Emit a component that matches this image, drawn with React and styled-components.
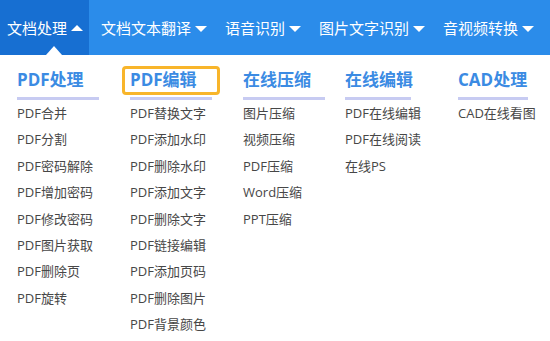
import React from "react";
import styled, { createGlobalStyle } from "styled-components";

const Global = createGlobalStyle`
  html, body { margin: 0; padding: 0; background: #fff; }
  body { font-family: "Open Sans", "Noto Sans CJK SC", sans-serif; }
`;

const Page = styled.div`
  width: 550px;
  height: 341px;
  overflow: hidden;
  background: #fff;
`;

const NavBar = styled.nav`
  height: 55px;
  background: #2b8cea;
  display: flex;
  align-items: stretch;
  gap: 5px;
`;

const Tab = styled.div`
  position: relative;
  display: flex;
  align-items: center;
  gap: 4px;
  padding: 0 6px 0 7px;
  background: ${(p) => (p.$active ? "#176fd2" : "transparent")};
  color: #fff;
  font-family: "Noto Sans CJK SC", sans-serif;
  font-size: 15px;
  white-space: nowrap;
`;

const Caret = styled.span`
  width: 0;
  height: 0;
  border-left: 6px solid transparent;
  border-right: 6px solid transparent;
  ${(p) =>
    p.$up
      ? "border-bottom: 6px solid #fff; margin-top: 1px;"
      : "border-top: 6px solid #fff; margin-top: 2px;"}
`;

const Pointer = styled.span`
  position: absolute;
  left: 46px;
  bottom: 0;
  width: 0;
  height: 0;
  border-left: 8px solid transparent;
  border-right: 8px solid transparent;
  border-bottom: 9px solid #fff;
`;

const Panel = styled.div`
  display: flex;
  padding: 10px 0 0 17px;
`;

const Column = styled.div`
  width: ${(p) => (p.$w ? `${p.$w}px` : "auto")};
  flex: none;
  display: flex;
  flex-direction: column;
  align-items: flex-start;
`;

const Heading = styled.div`
  position: relative;
  width: ${(p) => p.$w}px;
  line-height: 30px;
  padding-bottom: 2px;
  border-bottom: 3px solid #c7cbf2;
  font-size: 17px;
  font-weight: 700;
  color: #3b8be3;
  white-space: nowrap;
`;

const Highlight = styled.span`
  position: absolute;
  left: -8px;
  top: 1px;
  width: 98px;
  height: 29px;
  box-sizing: border-box;
  border: 3px solid #f8b52a;
  border-radius: 4px;
`;

const List = styled.ul`
  list-style: none;
  margin: 0;
  padding: 0;
`;

const Item = styled.li`
  font-size: 13px;
  line-height: 26.4px;
  color: #474747;
  white-space: nowrap;
`;

const tabs = [
  { label: "文档处理", active: true },
  { label: "文档文本翻译" },
  { label: "语音识别" },
  { label: "图片文字识别" },
  { label: "音视频转换" },
];

const columns = [
  {
    title: "PDF处理",
    w: 113,
    lw: 82,
    items: ["PDF合并", "PDF分割", "PDF密码解除", "PDF增加密码", "PDF修改密码", "PDF图片获取", "PDF删除页", "PDF旋转"],
  },
  {
    title: "PDF编辑",
    w: 113,
    lw: 82,
    highlight: true,
    items: ["PDF替换文字", "PDF添加水印", "PDF删除水印", "PDF添加文字", "PDF删除文字", "PDF链接编辑", "PDF添加页码", "PDF删除图片", "PDF背景颜色"],
  },
  {
    title: "在线压缩",
    w: 102,
    lw: 82,
    items: ["图片压缩", "视频压缩", "PDF压缩", "Word压缩", "PPT压缩"],
  },
  {
    title: "在线编辑",
    w: 113,
    lw: 66,
    items: ["PDF在线编辑", "PDF在线阅读", "在线PS"],
  },
  {
    title: "CAD处理",
    lw: 70,
    items: ["CAD在线看图"],
  },
];

export default function App() {
  return (
    <Page>
      <Global />
      <NavBar>
        {tabs.map((t) => (
          <Tab key={t.label} $active={t.active}>
            {t.label}
            <Caret $up={t.active} />
            {t.active && <Pointer />}
          </Tab>
        ))}
      </NavBar>
      <Panel>
        {columns.map((c) => (
          <Column key={c.title} $w={c.w}>
            <Heading $w={c.lw}>
              {c.title}
              {c.highlight && <Highlight />}
            </Heading>
            <List>
              {c.items.map((i) => (
                <Item key={i}>{i}</Item>
              ))}
            </List>
          </Column>
        ))}
      </Panel>
    </Page>
  );
}
